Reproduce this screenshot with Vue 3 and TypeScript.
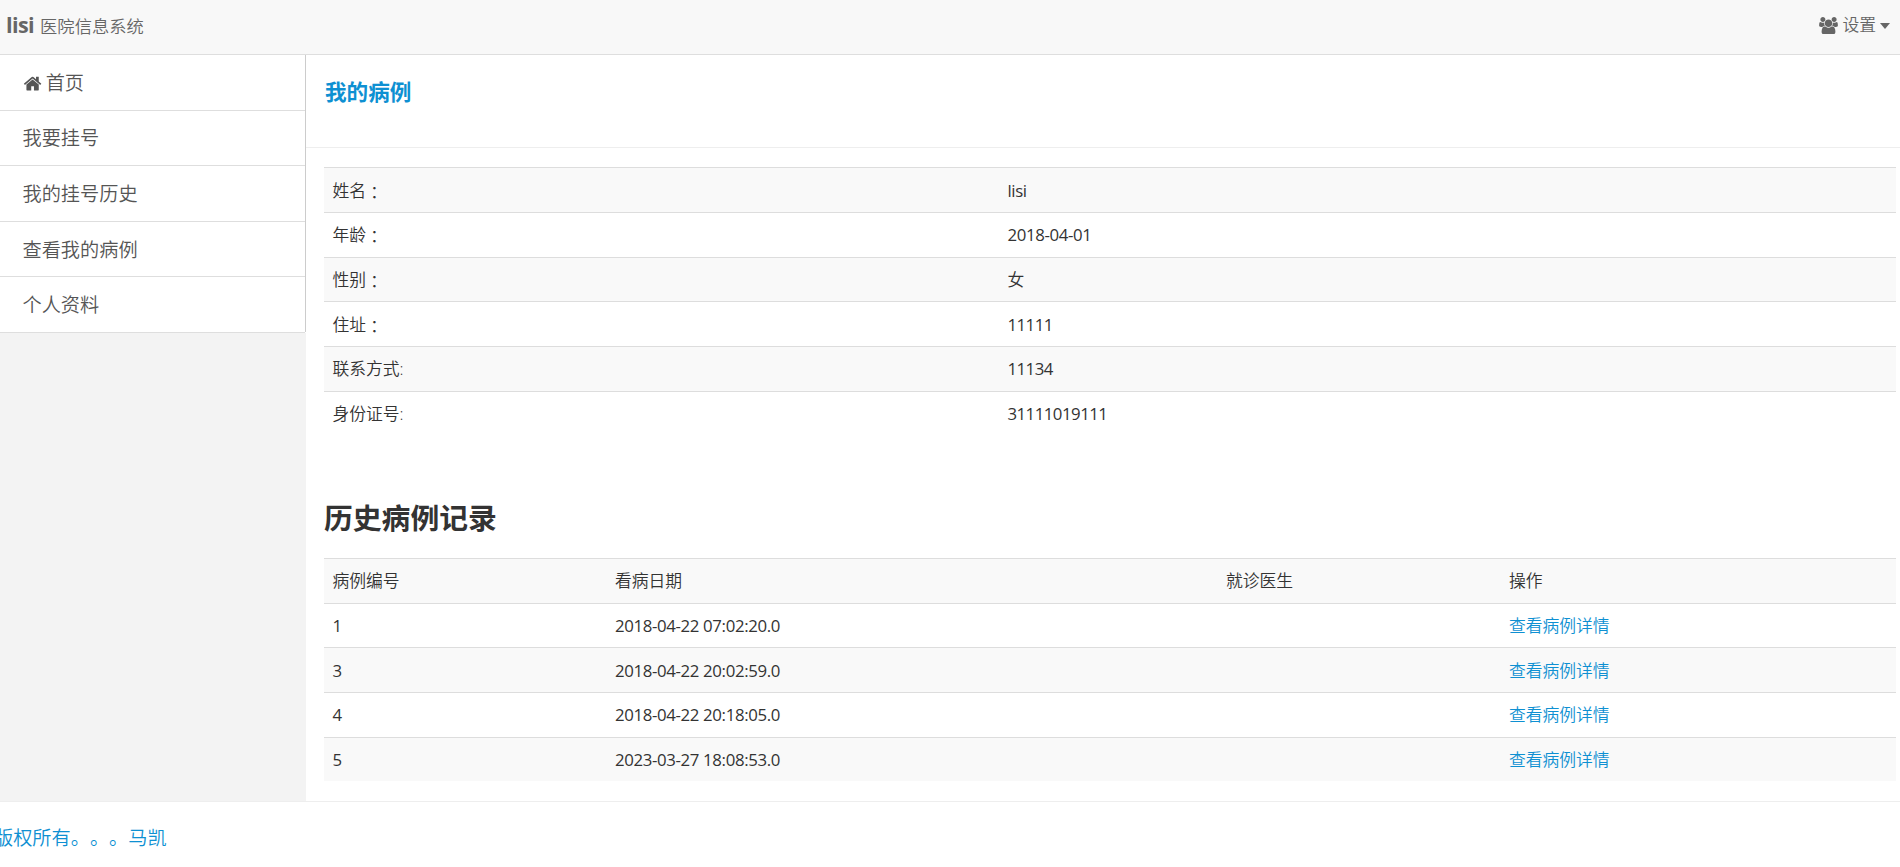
<script setup lang="ts">
interface Field {
  label: string
  colon?: boolean
  value: string
  date?: boolean
}

interface MedicalRecord {
  id: number
  date: string
  doctor: string
}

const menu: string[] = ['我要挂号', '我的挂号历史', '查看我的病例', '个人资料']

const fields: Field[] = [
  { label: '姓名', colon: true, value: 'lisi', date: true },
  { label: '年龄', colon: true, value: '2018-04-01', date: true },
  { label: '性别', colon: true, value: '女' },
  { label: '住址', colon: true, value: '11111' },
  { label: '联系方式:', value: '11134' },
  { label: '身份证号:', value: '31111019111' },
]

const records: MedicalRecord[] = [
  { id: 1, date: '2018-04-22 07:02:20.0', doctor: '' },
  { id: 3, date: '2018-04-22 20:02:59.0', doctor: '' },
  { id: 4, date: '2018-04-22 20:18:05.0', doctor: '' },
  { id: 5, date: '2023-03-27 18:08:53.0', doctor: '' },
]

const cellClass = (f: Field): string => {
  if (f.value === '女') return ''
  return f.date ? 'date' : 'latin'
}
</script>

<template>
  <div class="page">
    <header class="topbar">
      <div class="brand"><strong>lisi</strong><small>医院信息系统</small></div>
      <a class="settings">
        <svg class="users" viewBox="0 0 1920 1792"><path d="M593 896q-162 5-265 128h-134q-82 0-138-40.5t-56-118.5q0-353 124-353 6 0 43.5 21t97.5 42.5 119 21.5q67 0 133-23-5 37-5 66 0 139 81 256zm1071 637q0 120-73 189.5t-194 69.5h-874q-121 0-194-69.5t-73-189.5q0-53 3.5-103.5t14-109 26.5-108.5 43-97.5 62-81 85.5-53.5 111.5-20q10 0 43 21.5t73 48 107 48 135 21.5 135-21.5 107-48 73-48 43-21.5q61 0 111.5 20t85.5 53.5 62 81 43 97.5 26.5 108.5 14 109 3.5 103.5zm-1024-1277q0 106-75 181t-181 75-181-75-75-181 75-181 181-75 181 75 75 181zm704 384q0 159-112.5 271.5t-271.5 112.5-271.5-112.5-112.5-271.5 112.5-271.5 271.5-112.5 271.5 112.5 112.5 271.5zm576 225q0 78-56 118.5t-138 40.5h-134q-103-123-265-128 81-117 81-256 0-29-5-66 66 23 133 23 59 0 119-21.5t97.5-42.5 43.5-21q124 0 124 353zm-128-609q0 106-75 181t-181 75-181-75-75-181 75-181 181-75 181 75 75 181z" /></svg>
        <span>设置</span>
        <i class="caret"></i>
      </a>
    </header>

    <div class="body">
      <nav class="sidebar">
        <ul class="menu">
          <li>
            <svg class="home" viewBox="0 0 1792 1792"><path d="M1472 992v480q0 26-19 45t-45 19h-384v-384h-256v384h-384q-26 0-45-19t-19-45v-480q0-1 .5-3t.5-3l575-474 575 474q1 2 1 6zm223-69l-62 74q-8 9-21 11h-3q-13 0-21-7l-692-577-692 577q-12 8-24 7-13-2-21-11l-62-74q-8-10-7-23.5t11-21.5l719-599q32-26 76-26t76 26l244 204v-195q0-14 9-23t23-9h192q14 0 23 9t9 23v408l219 182q10 8 11 21.5t-7 23.5z" /></svg>
            <span>首页</span>
          </li>
          <li v-for="item in menu" :key="item">{{ item }}</li>
        </ul>
      </nav>

      <main class="content">
        <div class="title"><strong>我的病例</strong></div>
        <table class="grid info">
          <colgroup><col class="c-label" /><col /></colgroup>
          <tbody>
            <tr v-for="f in fields" :key="f.label">
              <td>{{ f.label }}<span v-if="f.colon" class="colon">：</span></td>
              <td :class="cellClass(f)">{{ f.value }}</td>
            </tr>
          </tbody>
        </table>
        <h2>历史病例记录</h2>
        <table class="grid">
          <colgroup><col class="c-id" /><col class="c-date" /><col class="c-doctor" /><col /></colgroup>
          <tbody>
            <tr><td>病例编号</td><td>看病日期</td><td>就诊医生</td><td>操作</td></tr>
            <tr v-for="r in records" :key="r.id">
              <td class="latin">{{ r.id }}</td>
              <td class="date">{{ r.date }}</td>
              <td>{{ r.doctor }}</td>
              <td><a>查看病例详情</a></td>
            </tr>
          </tbody>
        </table>
      </main>
    </div>

    <footer><p>版权所有。。。马凯</p></footer>
  </div>
</template>

<style>
body {
  margin: 0;
  background: #fff;
}
</style>

<style scoped>
.page {
  height: 867px;
  overflow: hidden;
  display: flex;
  flex-direction: column;
  font: 350 16.8px/26.88px "Open Sans", "Noto Sans CJK SC", sans-serif;
  text-spacing-trim: space-all;
  color: #333;
}
strong,
h2 {
  font-weight: 700;
}
.topbar {
  box-sizing: border-box;
  height: 55px;
  flex: none;
  display: flex;
  justify-content: space-between;
  background: #f8f8f8;
  border-bottom: 1px solid #dedede;
  color: #666;
}
.brand {
  display: flex;
  align-items: baseline;
  gap: 6px;
  padding: 12px 0 0 6px;
}
.brand strong {
  font-size: 21.6px;
  letter-spacing: -0.6px;
}
.brand small {
  font-size: 17.28px;
}
.settings {
  display: flex;
  align-items: center;
  height: 51px;
  padding-right: 10px;
}
.users {
  width: 19px;
  height: 17.5px;
  margin-right: 4px;
  fill: currentColor;
}
.caret {
  margin-left: 4px;
  border: 5px solid transparent;
  border-top: 6px solid #666;
  border-bottom: 0;
}
.body {
  flex: none;
  display: flex;
  height: 746px;
}
.sidebar {
  width: 306px;
  flex: none;
  background: #f3f3f3;
}
.menu {
  list-style: none;
  margin: 0;
  padding: 0;
  background: linear-gradient(#ccc, #ccc) right top / 1px 277px no-repeat #fff;
}
.menu li {
  box-sizing: border-box;
  display: flex;
  align-items: center;
  height: 55.6px;
  margin-right: 1px;
  padding: 2px 0 0 22.5px;
  border-bottom: 1px solid #dedede;
  font-size: 19.2px;
  color: #555;
}
.home {
  width: 19.2px;
  height: 19.2px;
  margin-right: 4px;
  fill: currentColor;
}
.content {
  flex: 1;
  background: #fff;
}
.title {
  box-sizing: border-box;
  height: 93px;
  padding: 19px 0 0 19px;
  border-bottom: 1px solid #eee;
  font-size: 21.6px;
  line-height: 35px;
  color: #0e90d2;
}
.grid {
  width: 1572px;
  margin-left: 18px;
  table-layout: fixed;
  border-spacing: 0;
}
.info {
  margin-top: 19.4px;
}
.c-label {
  width: 675px;
}
.c-id {
  width: 282.5px;
}
.c-date {
  width: 611px;
}
.c-doctor {
  width: 283px;
}
td {
  height: 26.88px;
  padding: 9.3px 8.4px 7.5px;
  border-top: 1px solid #ddd;
  line-height: 26.8px;
}
tr:nth-child(odd) td {
  background: #f9f9f9;
}
.latin {
  font-weight: 400;
  letter-spacing: -0.5px;
}
.date {
  font-weight: 400;
  letter-spacing: -0.34px;
}
.colon {
  font-family: "Noto Sans CJK TC", sans-serif;
  line-height: 0;
  vertical-align: -2px;
}
h2 {
  margin: 60.6px 0 19px 18px;
  font-size: 28.8px;
  line-height: 43px;
}
a {
  color: #0e90d2;
}
.settings {
  color: #666;
}
footer {
  border-top: 1px solid #eee;
  color: #0e90d2;
  font-size: 19.2px;
}
footer p {
  margin: 23px 0 0 -6px;
}
</style>
